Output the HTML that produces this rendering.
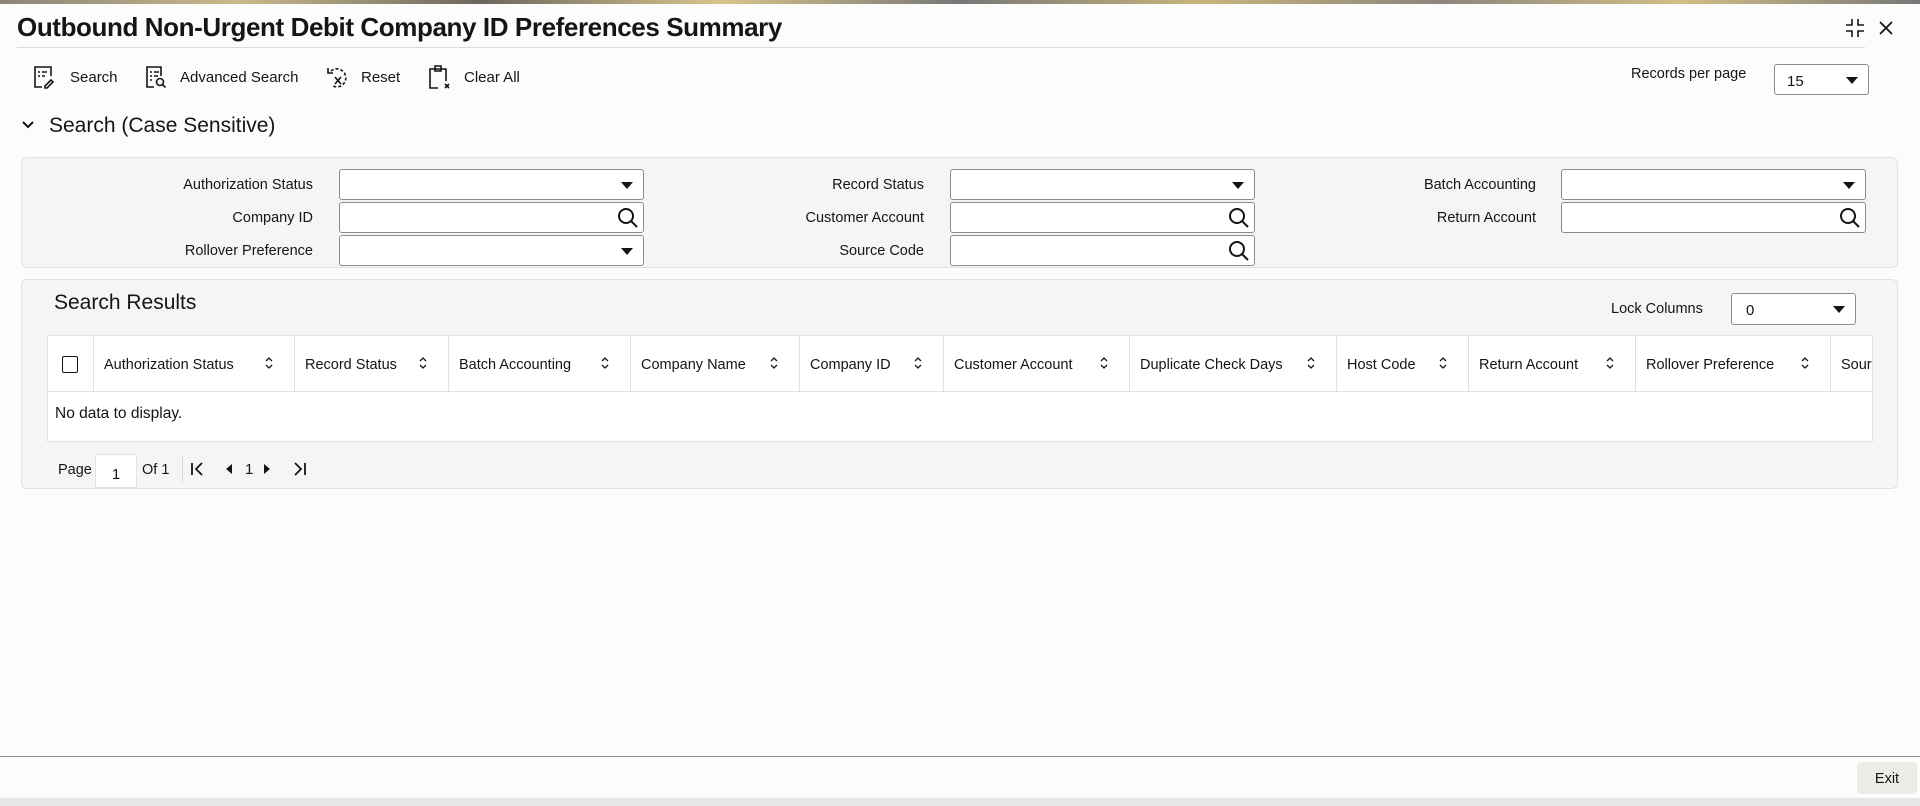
<!DOCTYPE html>
<html><head><meta charset="utf-8">
<style>
*{box-sizing:border-box;margin:0;padding:0}
body{width:1920px;height:806px;overflow:hidden;background:#fcfcfb;font-family:"Liberation Sans",sans-serif;color:#161513;position:relative}
.a{position:absolute;white-space:nowrap}
.strip{left:0;top:0;width:1920px;height:4px;background:linear-gradient(90deg,#8a8478,#c9b98a,#6b675f,#d8c48a,#777,#c8b47c,#8b867d,#d2be86,#777)}
.title{left:17px;top:12px;font-size:26px;font-weight:bold;letter-spacing:-0.4px}
.hr{left:17px;top:47px;width:1848px;height:1px;background:#dcdad6}
.tb{font-size:15px;top:69px}
.lbl{font-size:14.5px;text-align:right}
.inp{height:31px;border:1px solid #8f8c87;border-radius:3px;background:#fff}
.tri{position:absolute;right:10px;top:12px;width:0;height:0;border-left:6px solid transparent;border-right:6px solid transparent;border-top:7px solid #161513}
.mag{position:absolute;right:4px;top:4px}
.panel{background:#f6f5f3;border:1px solid #e4e2de;border-radius:6px}
.th{top:335px;height:57px;border-right:1px solid #e4e2de;font-size:14.5px;padding:22px 0 0 10px}
.sort{position:absolute;right:20px;top:21px}
</style></head><body>
<div class="a strip"></div>
<div class="a title">Outbound Non-Urgent Debit Company ID Preferences Summary</div>
<svg class="a" style="left:1845px;top:18px" width="20" height="20" viewBox="0 0 20 20" fill="none" stroke="#161513" stroke-width="1.6"><path d="M7 1v6H1M13 1v6h6M7 19v-6H1M13 19v-6h6"/></svg>
<svg class="a" style="left:1878px;top:20px" width="16" height="16" viewBox="0 0 16 16" stroke="#161513" stroke-width="1.8"><path d="M2 2l12 12M14 2L2 14"/></svg>
<div class="a hr"></div>

<svg class="a" style="left:33px;top:65px" width="22" height="24" viewBox="0 0 22 24" fill="none" stroke="#161513" stroke-width="1.6"><path d="M9 22H2V2h16v9"/><path d="M5 7h2M9 7h5M5 11h2M9 11h3"/><path d="M12 21l6-6 2 2-6 6h-2z"/></svg>
<div class="a tb" style="left:70px">Search</div>
<svg class="a" style="left:145px;top:65px" width="22" height="24" viewBox="0 0 22 24" fill="none" stroke="#161513" stroke-width="1.6"><path d="M9 22H2V2h14v9"/><path d="M5 7h2M9 7h5M5 11h2M9 11h4M5 15h2"/><circle cx="15" cy="17" r="3.5"/><path d="M17.5 19.5l3 3"/></svg>
<div class="a tb" style="left:180px">Advanced Search</div>
<svg class="a" style="left:325px;top:65px" width="26" height="24" viewBox="0 0 26 24" fill="none" stroke="#161513" stroke-width="1.6"><path d="M6 6a9 9 0 1 1 2 15" stroke-dasharray="3 2"/><path d="M3 3v5h5"/><path d="M10 12l6 7M16 12l-6 7"/></svg>
<div class="a tb" style="left:361px">Reset</div>
<svg class="a" style="left:428px;top:64px" width="24" height="26" viewBox="0 0 24 26" fill="none" stroke="#161513" stroke-width="1.6"><path d="M10 24H2V5h16v12"/><path d="M7 2h6v5H7z"/><path d="M17 20l4 4M21 20l-4 4"/></svg>
<div class="a tb" style="left:464px">Clear All</div>

<div class="a" style="left:1631px;top:66px;font-size:14.5px">Records per page</div>
<div class="a inp" style="left:1774px;top:64px;width:95px;height:31px"><span style="position:absolute;left:12px;top:8px;font-size:15px">15</span><div class="tri"></div></div>

<svg class="a" style="left:21px;top:120px" width="14" height="10" viewBox="0 0 14 10" fill="none" stroke="#161513" stroke-width="2"><path d="M2 2l5 5 5-5"/></svg>
<div class="a" style="left:49px;top:114px;font-size:21px">Search (Case Sensitive)</div>

<div class="a panel" style="left:21px;top:157px;width:1877px;height:111px"></div>
<div class="a lbl" style="left:113px;width:200px;top:177px">Authorization Status</div>
<div class="a lbl" style="left:113px;width:200px;top:210px">Company ID</div>
<div class="a lbl" style="left:113px;width:200px;top:243px">Rollover Preference</div>
<div class="a inp" style="left:339px;top:169px;width:305px"><div class="tri"></div></div>
<div class="a inp" style="left:339px;top:202px;width:305px"><svg class="mag" width="22" height="22" viewBox="0 0 22 22" fill="none" stroke="#161513" stroke-width="2"><circle cx="9" cy="9" r="7"/><path d="M14 14l6 6"/></svg></div>
<div class="a inp" style="left:339px;top:235px;width:305px"><div class="tri"></div></div>

<div class="a lbl" style="left:724px;width:200px;top:177px">Record Status</div>
<div class="a lbl" style="left:724px;width:200px;top:210px">Customer Account</div>
<div class="a lbl" style="left:724px;width:200px;top:243px">Source Code</div>
<div class="a inp" style="left:950px;top:169px;width:305px"><div class="tri"></div></div>
<div class="a inp" style="left:950px;top:202px;width:305px"><svg class="mag" width="22" height="22" viewBox="0 0 22 22" fill="none" stroke="#161513" stroke-width="2"><circle cx="9" cy="9" r="7"/><path d="M14 14l6 6"/></svg></div>
<div class="a inp" style="left:950px;top:235px;width:305px"><svg class="mag" width="22" height="22" viewBox="0 0 22 22" fill="none" stroke="#161513" stroke-width="2"><circle cx="9" cy="9" r="7"/><path d="M14 14l6 6"/></svg></div>

<div class="a lbl" style="left:1336px;width:200px;top:177px">Batch Accounting</div>
<div class="a lbl" style="left:1336px;width:200px;top:210px">Return Account</div>
<div class="a inp" style="left:1561px;top:169px;width:305px"><div class="tri"></div></div>
<div class="a inp" style="left:1561px;top:202px;width:305px"><svg class="mag" width="22" height="22" viewBox="0 0 22 22" fill="none" stroke="#161513" stroke-width="2"><circle cx="9" cy="9" r="7"/><path d="M14 14l6 6"/></svg></div>

<div class="a panel" style="left:21px;top:279px;width:1877px;height:210px"></div>
<div class="a" style="left:54px;top:291px;font-size:21px">Search Results</div>
<div class="a" style="left:1611px;top:301px;font-size:14.5px">Lock Columns</div>
<div class="a inp" style="left:1731px;top:293px;width:125px;height:32px"><span style="position:absolute;left:14px;top:8px;font-size:15px">0</span><div class="tri"></div></div>

<div class="a" style="left:47px;top:335px;width:1826px;height:107px;background:#fff;border:1px solid #e4e2de"></div>
<div class="a" style="left:47px;top:391px;width:1826px;height:1px;background:#e4e2de"></div>
<div class="a" style="left:62px;top:356px;width:16px;height:17px;border:1.5px solid #161513;border-radius:2px"></div>
<div class="a" style="left:93px;top:335px;width:1px;height:57px;background:#e4e2de"></div>
<div class="a th" style="left:94px;width:201px">Authorization Status<svg class="sort" width="10" height="14" viewBox="0 0 10 14" fill="none" stroke="#161513" stroke-width="1.3"><path d="M2 5l3-3 3 3M2 9l3 3 3-3"/></svg></div>
<div class="a th" style="left:295px;width:154px">Record Status<svg class="sort" width="10" height="14" viewBox="0 0 10 14" fill="none" stroke="#161513" stroke-width="1.3"><path d="M2 5l3-3 3 3M2 9l3 3 3-3"/></svg></div>
<div class="a th" style="left:449px;width:182px">Batch Accounting<svg class="sort" width="10" height="14" viewBox="0 0 10 14" fill="none" stroke="#161513" stroke-width="1.3"><path d="M2 5l3-3 3 3M2 9l3 3 3-3"/></svg></div>
<div class="a th" style="left:631px;width:169px">Company Name<svg class="sort" width="10" height="14" viewBox="0 0 10 14" fill="none" stroke="#161513" stroke-width="1.3"><path d="M2 5l3-3 3 3M2 9l3 3 3-3"/></svg></div>
<div class="a th" style="left:800px;width:144px">Company ID<svg class="sort" width="10" height="14" viewBox="0 0 10 14" fill="none" stroke="#161513" stroke-width="1.3"><path d="M2 5l3-3 3 3M2 9l3 3 3-3"/></svg></div>
<div class="a th" style="left:944px;width:186px">Customer Account<svg class="sort" width="10" height="14" viewBox="0 0 10 14" fill="none" stroke="#161513" stroke-width="1.3"><path d="M2 5l3-3 3 3M2 9l3 3 3-3"/></svg></div>
<div class="a th" style="left:1130px;width:207px">Duplicate Check Days<svg class="sort" width="10" height="14" viewBox="0 0 10 14" fill="none" stroke="#161513" stroke-width="1.3"><path d="M2 5l3-3 3 3M2 9l3 3 3-3"/></svg></div>
<div class="a th" style="left:1337px;width:132px">Host Code<svg class="sort" width="10" height="14" viewBox="0 0 10 14" fill="none" stroke="#161513" stroke-width="1.3"><path d="M2 5l3-3 3 3M2 9l3 3 3-3"/></svg></div>
<div class="a th" style="left:1469px;width:167px">Return Account<svg class="sort" width="10" height="14" viewBox="0 0 10 14" fill="none" stroke="#161513" stroke-width="1.3"><path d="M2 5l3-3 3 3M2 9l3 3 3-3"/></svg></div>
<div class="a th" style="left:1636px;width:195px">Rollover Preference<svg class="sort" width="10" height="14" viewBox="0 0 10 14" fill="none" stroke="#161513" stroke-width="1.3"><path d="M2 5l3-3 3 3M2 9l3 3 3-3"/></svg></div>
<div class="a th" style="left:1831px;width:41px;overflow:hidden;border-right:none">Source Code</div>
<div class="a" style="left:55px;top:405px;font-size:15.5px">No data to display.</div>

<div class="a" style="left:58px;top:462px;font-size:14.5px">Page</div>
<div class="a" style="left:95px;top:454px;width:42px;height:34px;background:#fff;border:1px solid #e4e2de;border-radius:3px;font-size:15px;text-align:center;padding-top:11px">1</div>
<div class="a" style="left:142px;top:462px;font-size:14.5px">Of 1</div>
<div class="a" style="left:182px;top:456px;width:1px;height:26px;background:#dcdad6"></div>
<svg class="a" style="left:190px;top:461px" width="16" height="16" viewBox="0 0 16 16" fill="none" stroke="#161513" stroke-width="1.8"><path d="M2 2v12M12 2L6 8l6 6"/></svg>
<svg class="a" style="left:224px;top:463px" width="10" height="12" viewBox="0 0 10 12"><path d="M8 1L2 6l6 5z" fill="#161513"/></svg>
<div class="a" style="left:245px;top:461px;font-size:15px">1</div>
<svg class="a" style="left:262px;top:463px" width="10" height="12" viewBox="0 0 10 12"><path d="M2 1l6 5-6 5z" fill="#161513"/></svg>
<svg class="a" style="left:291px;top:461px" width="16" height="16" viewBox="0 0 16 16" fill="none" stroke="#161513" stroke-width="1.8"><path d="M14 2v12M4 2l6 6-6 6"/></svg>

<div class="a" style="left:0;top:756px;width:1920px;height:1px;background:#8f8c87"></div>
<div class="a" style="left:1857px;top:762px;width:60px;height:32px;background:#edebe8;border-radius:4px;font-size:14.5px;text-align:center;padding-top:9px">Exit</div>
<div class="a" style="left:0;top:798px;width:1920px;height:8px;background:#e6e6e6"></div>
</body></html>
